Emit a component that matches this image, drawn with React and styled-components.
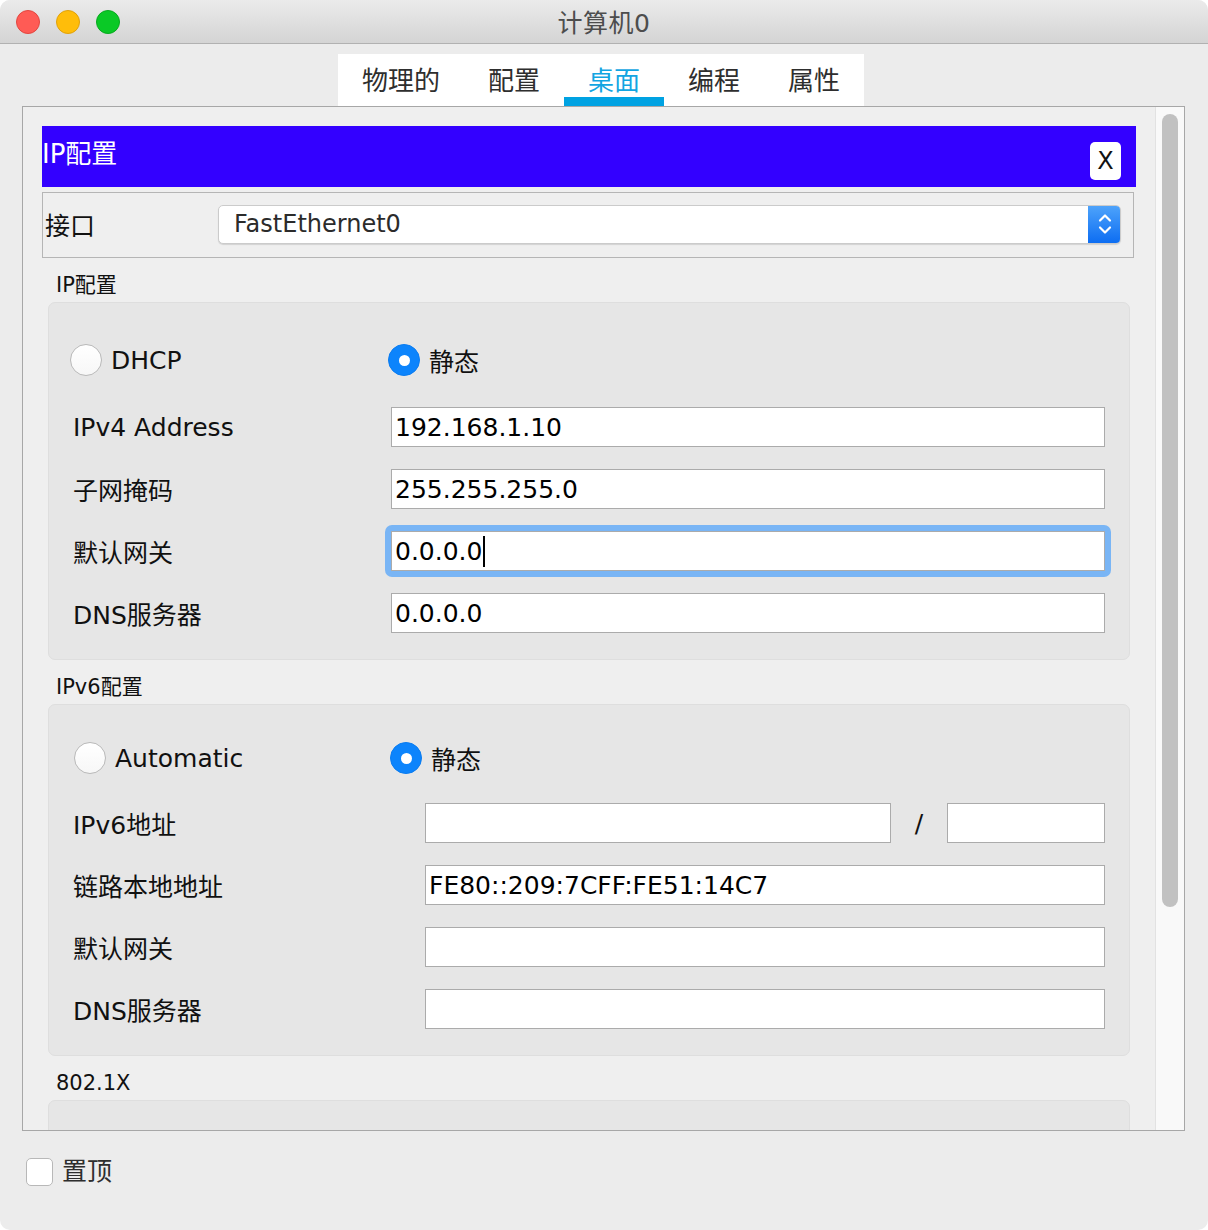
import styled, { createGlobalStyle } from "styled-components";

const GlobalStyle = createGlobalStyle`
  html, body {
    margin: 0;
    padding: 0;
    background: #ffffff;
  }
  * {
    box-sizing: border-box;
  }
`;

const FONT = `"DejaVu Sans", "Noto Sans CJK SC", sans-serif`;

const Window = styled.div`
  width: 1208px;
  height: 1230px;
  background: #ececec;
  border-radius: 10px;
  overflow: hidden;
  display: flex;
  flex-direction: column;
  font-family: ${FONT};
  color: #111;
`;

const TitleBar = styled.header`
  height: 44px;
  flex: none;
  display: grid;
  grid-template-columns: 1fr auto 1fr;
  align-items: center;
  background: linear-gradient(#ebebeb, #d4d4d4);
  border-bottom: 1px solid #b1b1b1;
`;

const Lights = styled.div`
  display: flex;
  gap: 16px;
  padding-left: 16px;
`;

const Light = styled.span`
  width: 24px;
  height: 24px;
  border-radius: 50%;
  background: ${(props) => props.color};
  border: 1px solid ${(props) => props.edge};
`;

const Title = styled.div`
  font-size: 25px;
  color: #4d4d4d;
  letter-spacing: 0.5px;
  padding-bottom: 2px;
`;

const TabRow = styled.nav`
  flex: none;
  display: flex;
  justify-content: center;
  padding: 10px 6px 0 0;
`;

const TabStrip = styled.div`
  display: flex;
  background: #ffffff;
`;

const Tab = styled.div`
  height: 52px;
  padding: 0 24px 3px;
  display: flex;
  align-items: center;
  font-size: 26px;
  color: ${(props) => (props.$active ? "#13a5e2" : "#2e2e2e")};
  box-shadow: ${(props) =>
    props.$active ? "inset 0 -9px 0 #00a2e2" : "none"};
`;

const Frame = styled.main`
  height: 1025px;
  flex: none;
  margin: 0 23px 0 22px;
  border: 1px solid #a7a7a7;
  background: #efefef;
  display: flex;
`;

const Scroller = styled.div`
  flex: 1;
  overflow: hidden;
  padding: 19px 19px 0;
  display: flex;
  flex-direction: column;
`;

const Track = styled.div`
  width: 29px;
  flex: none;
  border-left: 1px solid #e2e2e2;
  background: #f9f9f9;
  padding: 7px 0 0 6px;
`;

const Thumb = styled.div`
  width: 16px;
  height: 793px;
  border-radius: 8px;
  background: #c1c1c1;
`;

const Banner = styled.div`
  height: 61px;
  flex: none;
  background: #3300ff;
  color: #ffffff;
  display: flex;
  justify-content: space-between;
  align-items: flex-start;
  padding: 7px 15px 0 0;
  font-size: 26px;
`;

const CloseButton = styled.div`
  width: 31px;
  height: 38px;
  margin-top: 9px;
  background: #ffffff;
  border-radius: 5px;
  color: #111;
  font-size: 24px;
  display: flex;
  align-items: center;
  justify-content: center;
`;

const InterfaceBox = styled.div`
  height: 66px;
  flex: none;
  margin: 5px 2px 0 0;
  border: 1px solid #b5b5b5;
  display: flex;
  align-items: center;
  padding: 0 12px 2px 2px;
`;

const InterfaceLabel = styled.span`
  width: 173px;
  font-size: 25px;
`;

const Select = styled.div`
  flex: 1;
  height: 39px;
  background: #ffffff;
  border: 1px solid #cbcbcb;
  border-radius: 5px;
  box-shadow: 0 1px 1px rgba(0, 0, 0, 0.12);
  display: flex;
  align-items: center;
  justify-content: space-between;
  padding-left: 15px;
  font-size: 24px;
  color: #2b2b2b;
  overflow: hidden;
`;

const Stepper = styled.div`
  width: 33px;
  height: 39px;
  margin: -1px -1px -1px 0;
  border-radius: 0 5px 5px 0;
  background: linear-gradient(#4fa4fb, #0b6cf2);
  display: flex;
  align-items: center;
  justify-content: center;
`;

const SectionLabel = styled.div`
  font-size: 21px;
  line-height: 24px;
  padding-left: 14px;
  margin: 15px 0 5px;
  flex: none;
`;

const Group = styled.section`
  flex: none;
  margin: 0 6px;
  background: #e6e6e6;
  border: 1px solid #dedede;
  border-radius: 7px;
  display: grid;
  grid-template-columns: ${(props) => props.$labelWidth}px 1fr;
  align-items: center;
  row-gap: 22px;
  padding: ${(props) => props.$top}px 24px 26px;
  min-height: ${(props) => props.$minHeight || 0}px;
`;

const RadioRow = styled.div`
  grid-column: 1 / -1;
  display: flex;
  align-items: center;
  height: 40px;
  margin: 0 0 ${(props) => props.$after}px ${(props) => props.$offset}px;
`;

const RadioOption = styled.label`
  width: ${(props) => props.$width || "auto"};
  display: flex;
  align-items: center;
  gap: 9px;
  font-size: 25px;
`;

const RadioDot = styled.span`
  width: 32px;
  height: 32px;
  border-radius: 50%;
  flex: none;
  display: flex;
  align-items: center;
  justify-content: center;
  background: ${(props) =>
    props.$on ? "#0c84fc" : "linear-gradient(#ffffff, #f7f7f7)"};
  border: 1px solid ${(props) => (props.$on ? "#0a7cf0" : "#b9b9b9")};
  &::after {
    content: "";
    width: 11px;
    height: 11px;
    border-radius: 50%;
    background: #ffffff;
    display: ${(props) => (props.$on ? "block" : "none")};
  }
`;

const RowLabel = styled.span`
  font-size: 25px;
`;

const FieldLine = styled.div`
  display: flex;
  align-items: center;
`;

const Field = styled.div`
  flex: ${(props) => (props.$width ? "none" : "1")};
  width: ${(props) => (props.$width ? `${props.$width}px` : "auto")};
  height: 40px;
  background: #ffffff;
  border: 1px solid #ababab;
  display: flex;
  align-items: center;
  padding-left: 3px;
  font-size: 25px;
  color: #000;
  white-space: nowrap;
`;

const FocusRing = styled.div`
  flex: 1;
  margin: -6px;
  padding: 6px;
  border-radius: 7px;
  background: #79b5f5;
  display: flex;
`;

const Caret = styled.span`
  width: 2px;
  height: 31px;
  background: #000;
  margin-left: 1px;
`;

const Slash = styled.span`
  width: 56px;
  text-align: center;
  font-size: 25px;
  flex: none;
`;

const Footer = styled.footer`
  flex: 1;
  display: flex;
  align-items: flex-start;
  gap: 9px;
  padding: 27px 0 0 26px;
`;

const CheckBox = styled.span`
  width: 27px;
  height: 28px;
  border-radius: 5px;
  background: #ffffff;
  border: 1px solid #b8b8b8;
`;

const FooterText = styled.span`
  font-size: 25px;
  line-height: 28px;
  color: #2e2e2e;
`;

function Chevrons() {
  return (
    <svg width="16" height="26" viewBox="0 0 16 26" fill="none">
      <path
        d="M3 9.5 L8 4.5 L13 9.5"
        stroke="#ffffff"
        strokeWidth="2.2"
        strokeLinecap="round"
        strokeLinejoin="round"
      />
      <path
        d="M3 16.5 L8 21.5 L13 16.5"
        stroke="#ffffff"
        strokeWidth="2.2"
        strokeLinecap="round"
        strokeLinejoin="round"
      />
    </svg>
  );
}

const tabs = ["物理的", "配置", "桌面", "编程", "属性"];

const ipv4Rows = [
  { label: "IPv4 Address", value: "192.168.1.10" },
  { label: "子网掩码", value: "255.255.255.0" },
  { label: "默认网关", value: "0.0.0.0", focused: true },
  { label: "DNS服务器", value: "0.0.0.0" },
];

const ipv6Rows = [
  { label: "链路本地地址", value: "FE80::209:7CFF:FE51:14C7" },
  { label: "默认网关", value: "" },
  { label: "DNS服务器", value: "" },
];

function App() {
  return (
    <>
      <GlobalStyle />
      <Window>
        <TitleBar>
          <Lights>
            <Light color="#ff5b55" edge="#e2463f" />
            <Light color="#ffbd0a" edge="#e0a10a" />
            <Light color="#0ac926" edge="#08a91f" />
          </Lights>
          <Title>计算机0</Title>
          <div />
        </TitleBar>

        <TabRow>
          <TabStrip>
            {tabs.map((t) => (
              <Tab key={t} $active={t === "桌面"}>
                {t}
              </Tab>
            ))}
          </TabStrip>
        </TabRow>

        <Frame>
          <Scroller>
            <Banner>
              <span>IP配置</span>
              <CloseButton>X</CloseButton>
            </Banner>

            <InterfaceBox>
              <InterfaceLabel>接口</InterfaceLabel>
              <Select>
                FastEthernet0
                <Stepper>
                  <Chevrons />
                </Stepper>
              </Select>
            </InterfaceBox>

            <SectionLabel>IP配置</SectionLabel>
            <Group $labelWidth={318} $top={37}>
              <RadioRow $offset={-3} $after={5}>
                <RadioOption $width="318px">
                  <RadioDot />
                  DHCP
                </RadioOption>
                <RadioOption>
                  <RadioDot $on />
                  静态
                </RadioOption>
              </RadioRow>
              {ipv4Rows.map((row) => (
                <>
                  <RowLabel key={row.label + "l"}>{row.label}</RowLabel>
                  <FieldLine key={row.label + "f"}>
                    {row.focused ? (
                      <FocusRing>
                        <Field>
                          {row.value}
                          <Caret />
                        </Field>
                      </FocusRing>
                    ) : (
                      <Field>{row.value}</Field>
                    )}
                  </FieldLine>
                </>
              ))}
            </Group>

            <SectionLabel>IPv6配置</SectionLabel>
            <Group $labelWidth={352} $top={33}>
              <RadioRow $offset={1} $after={3}>
                <RadioOption $width="316px">
                  <RadioDot />
                  Automatic
                </RadioOption>
                <RadioOption>
                  <RadioDot $on />
                  静态
                </RadioOption>
              </RadioRow>
              <RowLabel>IPv6地址</RowLabel>
              <FieldLine>
                <Field />
                <Slash>/</Slash>
                <Field $width={158} />
              </FieldLine>
              {ipv6Rows.map((row) => (
                <>
                  <RowLabel key={row.label + "l"}>{row.label}</RowLabel>
                  <FieldLine key={row.label + "f"}>
                    <Field>{row.value}</Field>
                  </FieldLine>
                </>
              ))}
            </Group>

            <SectionLabel>802.1X</SectionLabel>
            <Group $labelWidth={318} $top={0} $minHeight={120} />
          </Scroller>
          <Track>
            <Thumb />
          </Track>
        </Frame>

        <Footer>
          <CheckBox />
          <FooterText>置顶</FooterText>
        </Footer>
      </Window>
    </>
  );
}

export default App;
